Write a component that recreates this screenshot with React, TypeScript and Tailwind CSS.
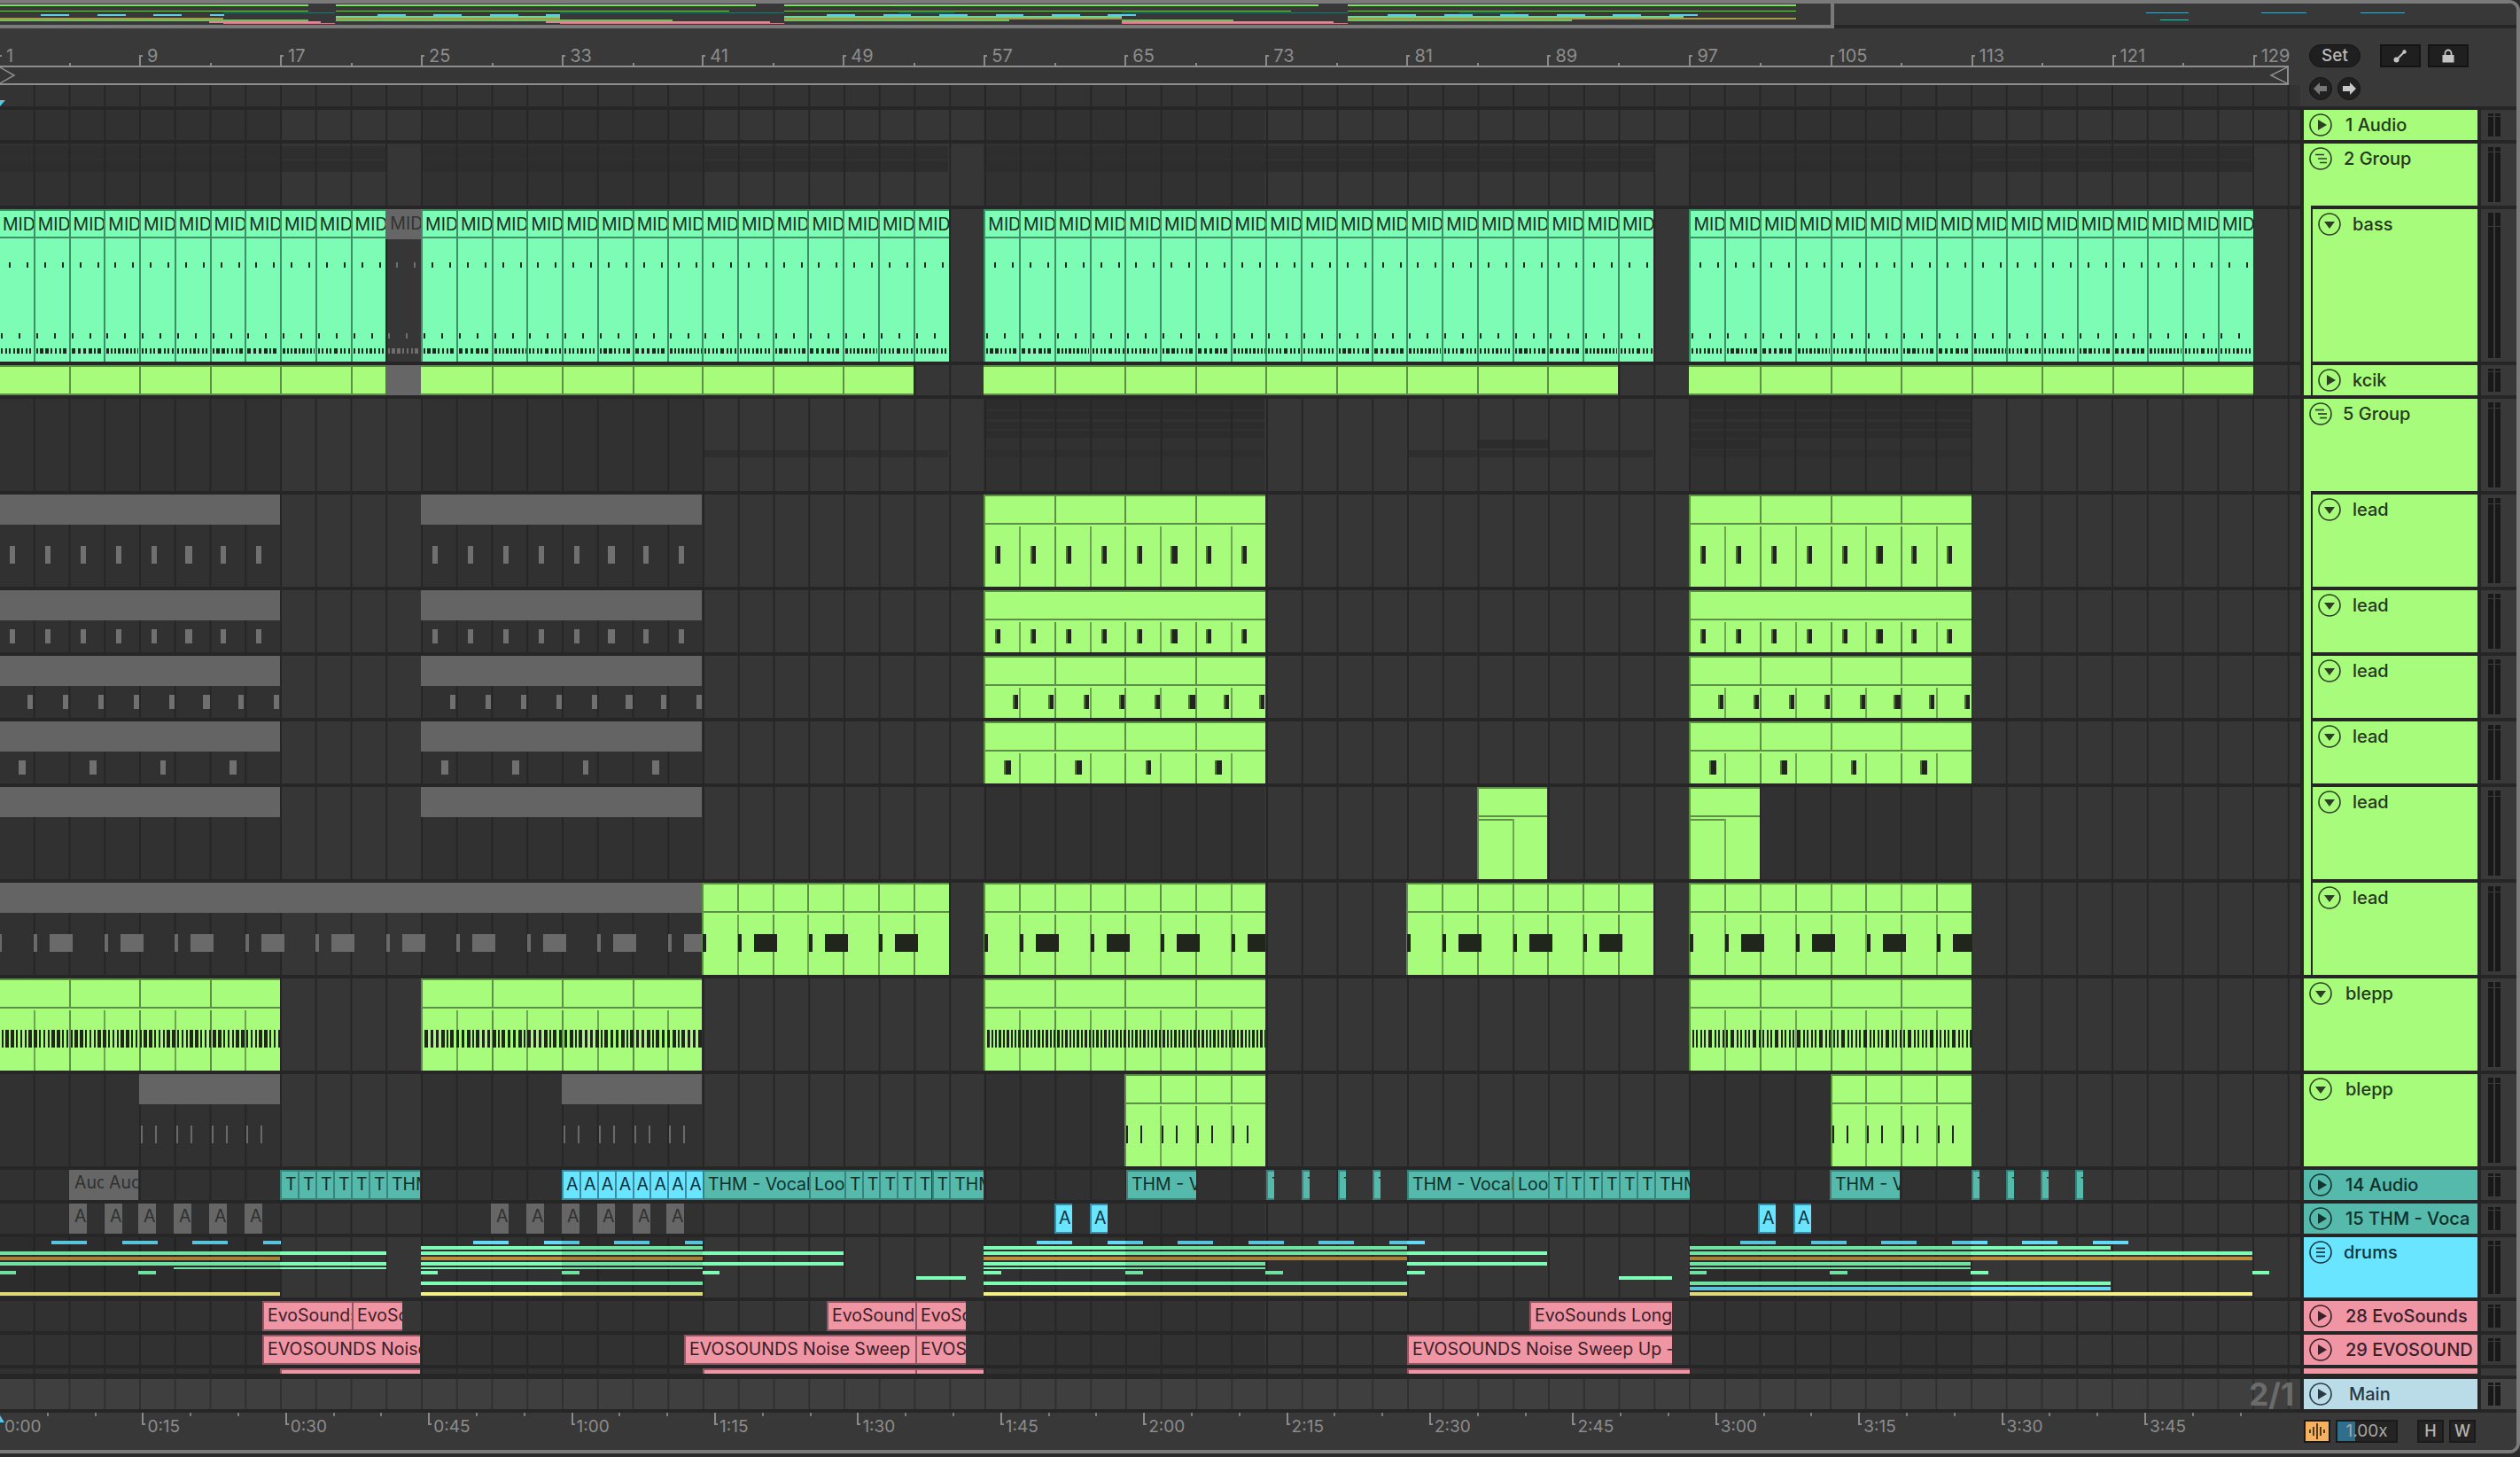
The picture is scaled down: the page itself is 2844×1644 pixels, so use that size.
import type { ReactNode } from "react";

// arrangement scale: 2 bars = 39.76px, the middle of the song sits a pixel to the left in the shot
const bar = (b: number) => -2 + (b - 1) * 19.88 - (b >= 41 && b <= 95 ? 1 : 0);

type Seg = [number, number];

function Box({ x, w, y, h, className = "", children }: { x: number; w: number; y?: number; h?: number; className?: string; children?: ReactNode }) {
  return (
    <div
      className={"absolute " + className}
      style={{ left: x, width: w, top: y ?? 0, ...(h === undefined ? { bottom: 0 } : { height: h }) }}
    >
      {children}
    </div>
  );
}

const DARK_COLS: Seg[] = [[0, 316], [475, 793], [1110, 1427], [1907, 2224]];

function Lane({ under, children, main }: { under?: ReactNode; children?: ReactNode; main?: boolean }) {
  return (
    <div className={"relative h-full w-[2596px] shrink-0 overflow-hidden " + (main ? "bg-[#3f3f3f]" : "bg-[#363636]")}>
      {!main && DARK_COLS.map(([a, b]) => <Box key={a} x={a} w={b - a} className="bg-[#313131]" />)}
      {under}
      <div
        className={
          "absolute inset-0 bg-size-[39.76px_100%] bg-position-[-2px_0] " +
          (main
            ? "bg-[linear-gradient(90deg,#303030_2px,transparent_2px)]"
            : "bg-[linear-gradient(90deg,#262626_2px,transparent_2px)]")
        }
      />
      {children}
    </div>
  );
}

function Meter({ top, main }: { top: string; main?: boolean }) {
  const col = (
    <div className="flex w-[6px] flex-col gap-px">
      <div className={"bg-[#181818] " + top} />
      <div className="flex-1 bg-[#181818]" />
    </div>
  );
  return (
    <div className={"flex h-full w-[40px] shrink-0 gap-[2px] py-1 pl-2 " + (main ? "bg-[#444444]" : "bg-[#393939]")}>
      {col}
      {col}
    </div>
  );
}

type IconKind = "play" | "group" | "list" | "down";

function TrackIcon({ kind, color }: { kind: IconKind; color: string }) {
  return (
    <svg width="26" height="26" viewBox="0 0 26 26" className="shrink-0">
      <circle cx="13" cy="13" r="12" fill="none" stroke={color} strokeWidth="1.6" />
      {kind === "play" && <polygon points="10,7 10,19 20,13" fill={color} />}
      {kind === "down" && <polygon points="7,10 19,10 13,18" fill={color} />}
      {kind === "group" && (
        <g stroke={color} strokeWidth="1.7">
          <line x1="7" y1="8.5" x2="17" y2="8.5" />
          <line x1="10" y1="13" x2="20" y2="13" />
          <line x1="12" y1="17.5" x2="20" y2="17.5" />
        </g>
      )}
      {kind === "list" && (
        <g stroke={color} strokeWidth="1.7">
          <line x1="8" y1="8.5" x2="18" y2="8.5" />
          <line x1="8" y1="13" x2="18" y2="13" />
          <line x1="8" y1="17.5" x2="18" y2="17.5" />
        </g>
      )}
    </svg>
  );
}

const GREEN = { bg: "bg-[#a8fc7c]", text: "text-[#25381a]", stroke: "#2b4120" };
const TEAL = { bg: "bg-[#55b9ab]", text: "text-[#10302c]", stroke: "#12352f" };
const BLUE = { bg: "bg-[#69e5ff]", text: "text-[#123640]", stroke: "#123640" };
const PINK = { bg: "bg-[#f095a4]", text: "text-[#3b2029]", stroke: "#3b2029" };
const MAIN = { bg: "bg-[#b9dce8]", text: "text-[#2a3a42]", stroke: "#2a3a42" };

function Head({ tone, kind, label, gap, nested }: { tone: typeof GREEN; kind: IconKind; label: string; gap: string; nested?: boolean }) {
  return (
    <div className={"relative h-full w-[196px] shrink-0 " + (nested ? "" : tone.bg)}>
      {nested && <div className={"absolute -top-1 bottom-0 left-0 w-2 " + tone.bg} />}
      <div className={"flex h-full items-start overflow-hidden pt-[4px] " + (nested ? "ml-[10px] pl-[6px] " + tone.bg : "pl-[6px]")}>
        <div className={"flex items-center whitespace-nowrap text-[20px] font-medium leading-[26px] " + tone.text + " " + gap}>
          <TrackIcon kind={kind} color={tone.stroke} />
          <span>{label}</span>
        </div>
      </div>
    </div>
  );
}

function Row({ h, head, meter, main, children }: { h: string; head: ReactNode; meter: string; main?: boolean; children: ReactNode }) {
  return (
    <div className={"flex w-[2840px] gap-1 " + h}>
      {children}
      {head}
      <Meter top={meter} main={main} />
    </div>
  );
}

const LINE = "bg-[#5e8f46]";

function MidiClip({ s, e, title, noTop }: { s: number; e: number; title: number; noTop?: boolean }) {
  const left = bar(s);
  const width = bar(e) - left;
  const tlines: number[] = [];
  const blines: number[] = [];
  if (title) for (let b = s + title; b < e; b += title) tlines.push(b);
  for (let b = s + 2; b < e; b += 2) blines.push(b);
  return (
    <Box x={left} w={width} className="overflow-hidden border-l-2 border-t-2 border-[#5e8f46] bg-[#a8fc7c]">
      <div className="h-[32px] border-b-2 border-[#5e8f46]" />
      {tlines.map((b) => <Box key={b} x={bar(b) - left - 2} w={2} h={32} className={LINE} />)}
      {!noTop && blines.map((b) => (
        <Box key={b} x={bar(b) - left - 2} w={2} y={34} h={200} className={(b - s) % 4 === 0 ? LINE : "bg-[#6ea553]"} />
      ))}
    </Box>
  );
}

const GrayTitle = ({ s, e }: { s: number; e: number }) => (
  <Box x={bar(s)} w={bar(e) - bar(s)} h={34} className="bg-[#646464]" />
);

// per-clip note placement: every start gets the same offset list
function Notes({ starts, offs, y, h, gray, edge = true }: { starts: number[]; offs: Seg[]; y: number; h: number; gray?: boolean; edge?: boolean }) {
  return (
    <>
      {starts.flatMap((st) =>
        offs.map(([o, w]) => (
          <Box
            key={st + "-" + o}
            x={st + o}
            w={w}
            y={y}
            h={h}
            className={
              gray
                ? "bg-[#707070]"
                : "bg-[#20261c] " + (edge ? "border-l-2 border-[#566a4a]" : "")
            }
          />
        )),
      )}
    </>
  );
}

function periodic(from: number, to: number, period: number, offs: Seg[]) {
  const out: Seg[] = [];
  for (let x = from; x < to; x += period) {
    for (const [o, w] of offs) {
      if (x + o < to) out.push([x + o, Math.min(w, to - x - o)]);
    }
  }
  return out;
}

function dense(from: number, to: number, seed: number) {
  const out: Seg[] = [];
  let x = from + 3;
  let i = 0;
  while (x < to) {
    const k = (i * 7 + seed * 13 + (i * i) % 5) % 5;
    const w = [2, 2, 3, 2, 4][k];
    const g = [2, 2, 2, 3, 3][(k + i) % 5];
    out.push([x, Math.min(w, to - x)]);
    x += w + g;
    i++;
  }
  return out;
}

function Ticks({ segs, y, h, className }: { segs: Seg[]; y: number; h: number; className: string }) {
  return (
    <>
      {segs.map(([x, w]) => <Box key={x} x={x} w={w} y={y} h={h} className={className} />)}
    </>
  );
}

const MINT_SPANS: Seg[] = [[-1, 23], [25, 55], [57, 95], [97, 129]];

function BassLane() {
  const clips: number[] = [];
  MINT_SPANS.forEach(([s, e]) => {
    for (let b = s; b < e; b += 2) clips.push(b);
  });
  const off = [...clips.map((b) => bar(b)), bar(23)];
  return (
    <Lane>
      {clips.map((b) => (
        <Box key={b} x={bar(b)} w={39.76} className="overflow-hidden border-l-2 border-t-2 border-[#3f8f66] bg-[#7cfcb4]">
          <div className="h-[31px] overflow-hidden whitespace-nowrap border-b-2 border-[#3f8f66] pl-[3px] text-[19.5px] leading-[30px] text-[#1d2f25]">MID</div>
        </Box>
      ))}
      <Box x={bar(23)} w={39.76} h={34} className="overflow-hidden bg-[#666666] pl-[5px] text-[19.5px] leading-[32px] text-[#333333]">MID</Box>
      {off.map((x, i) => {
        const g = i === off.length - 1;
        const c = g ? "bg-[#6e6e6e]" : "bg-[#1d2a22]";
        return (
          <div key={i}>
            <Box x={x + 12} w={2} y={60} h={6} className={c} />
            <Box x={x + 32} w={2} y={60} h={6} className={c} />
            <Box x={x + 3} w={2} y={140} h={6} className={c} />
            <Box x={x + 23} w={2} y={140} h={6} className={c} />
            <Ticks segs={dense(x, x + 39, i)} y={157} h={6} className={c} />
          </div>
        );
      })}
    </Lane>
  );
}

const KCIK: Seg[] = [[1, 23], [25, 53], [57, 93], [97, 129]];

function KcikLane() {
  return (
    <Lane>
      {KCIK.map(([s, e]) => {
        const marks: number[] = [];
        for (let b = s + 4; b < e; b += 4) marks.push(b);
        return (
          <Box key={s} x={bar(s)} w={bar(e) - bar(s)} className="overflow-hidden border-y-2 border-[#5e8f46] bg-[#a8fc7c]">
            {marks.map((b) => <Box key={b} x={bar(b) - bar(s)} w={2} className={LINE} />)}
          </Box>
        );
      })}
      <Box x={bar(23)} w={39.76} className="bg-[#666666]" />
    </Lane>
  );
}

function Band({ spans, y, h, c = "bg-[#2c2c2c]" }: { spans: Seg[]; y: number; h: number; c?: string }) {
  return (
    <>
      {spans.map(([a, b]) => <Box key={a + "-" + y} x={a} w={b - a} y={y} h={h} className={c} />)}
    </>
  );
}

const G25 = [bar(1), bar(25)];
const A5797 = [bar(57), bar(97)];
const L1: Seg[] = [[13, 6], [53, 6], [93, 6], [133, 6], [173, 6], [211, 8], [251, 6], [291, 6]];
const L3: Seg[] = L1.map(([o, w]) => [o + 20, w]);
const L4: Seg[] = [[23, 8], [103, 8], [183, 6], [261, 8]];

function LeadLane({ offs, y, h }: { offs: Seg[]; y: number; h: number }) {
  return (
    <Lane>
      <GrayTitle s={1} e={17} />
      <GrayTitle s={25} e={41} />
      <Notes starts={G25} offs={offs} y={y} h={h} gray />
      <MidiClip s={57} e={73} title={4} />
      <MidiClip s={97} e={113} title={4} />
      <Notes starts={A5797} offs={offs} y={y} h={h} />
    </Lane>
  );
}

const P6: Seg[] = [[0, 4], [40, 4], [58, 26]];

function Lead6Lane() {
  const spans: Seg[] = [[41, 55], [57, 73], [81, 95], [97, 113]];
  return (
    <Lane>
      <GrayTitle s={1} e={41} />
      <Ticks segs={periodic(bar(1), bar(41), 79.52, P6)} y={58} h={20} className="bg-[#6a6a6a]" />
      {spans.map(([s, e]) => <MidiClip key={s} s={s} e={e} title={2} />)}
      {spans.map(([s, e]) => (
        <Ticks key={s} segs={periodic(bar(s) + 1, bar(e), 79.52, P6)} y={58} h={20} className="bg-[#20261c]" />
      ))}
    </Lane>
  );
}

function Blepp1Lane() {
  const spans: Seg[] = [[1, 17], [25, 41], [57, 73], [97, 113]];
  return (
    <Lane>
      {spans.map(([s, e]) => <MidiClip key={s} s={s} e={e} title={4} />)}
      {spans.map(([s, e], i) => (
        <Ticks key={s} segs={dense(bar(s) + 1, bar(e), i + 2)} y={58} h={20} className="bg-[#20261c]" />
      ))}
    </Lane>
  );
}

const P8: Seg[] = [[2, 2], [18, 2]];

function Blepp2Lane() {
  return (
    <Lane>
      <GrayTitle s={9} e={17} />
      <GrayTitle s={33} e={41} />
      <Ticks segs={periodic(bar(9), bar(17), 39.76, P8)} y={58} h={20} className="bg-[#6a6a6a]" />
      <Ticks segs={periodic(bar(33), bar(41), 39.76, P8)} y={58} h={20} className="bg-[#6a6a6a]" />
      <MidiClip s={65} e={73} title={2} />
      <MidiClip s={105} e={113} title={2} />
      <Ticks segs={periodic(bar(65), bar(73), 39.76, P8)} y={58} h={20} className="bg-[#20261c]" />
      <Ticks segs={periodic(bar(105), bar(113), 39.76, P8)} y={58} h={20} className="bg-[#20261c]" />
    </Lane>
  );
}

type Tone = "gray" | "teal" | "cyan" | "pink";
const CLIP_TONE: Record<Tone, string> = {
  gray: "bg-[#666666] text-[#303030] pl-[6px]",
  teal: "bg-[#55b9ab] text-[#10302c] border-y-2 border-l-2 border-[#39847a] pl-[4px]",
  cyan: "bg-[#69e5ff] text-[#10323c] border-y-2 border-l-2 border-[#3d8ba0] pl-[3px]",
  pink: "bg-[#f095a4] text-[#3b2029] border-y-2 border-l-2 border-[#8f5763] pl-[4px]",
};

function Label({ a, b, t, tone }: { a: number; b: number; t: string; tone: Tone }) {
  return (
    <Box x={a} w={b - a} className={"overflow-hidden whitespace-nowrap text-[19.5px] leading-[29px] " + CLIP_TONE[tone]}>
      {t}
    </Box>
  );
}

type L = [number, number, string];

function tRun(from: number, step: number, n: number, end: number, last: string): L[] {
  const out: L[] = [];
  for (let i = 0; i < n; i++) out.push([from + i * step, from + (i + 1) * step, "T"]);
  out.push([from + n * step, end, last]);
  return out;
}

const TEALS: L[] = [
  ...tRun(316, 20, 6, 474, "THM"),
  [793, 913, "THM - Vocal"],
  [913, 953, "Loop"],
  ...tRun(953, 19.7, 6, 1110, "THM"),
  [1271, 1350, "THM - Vocal"],
  [1429, 1438, "T"],
  [1469, 1478, "T"],
  [1510, 1519, "T"],
  [1549, 1558, "T"],
  [1588, 1707, "THM - Vocal"],
  [1707, 1747, "Loop"],
  ...tRun(1747, 20, 6, 1907, "THM"),
  [2065, 2144, "THM - Vocal"],
  [2225, 2234, "T"],
  [2264, 2273, "T"],
  [2303, 2312, "T"],
  [2342, 2351, "T"],
];

const GRAY_A = [78, 118, 156, 196, 236, 276, 554, 594, 634, 674, 714, 752];
const CYAN_A = [1190, 1230, 1984, 2024];

type DrumLine = { y: number; c: string; segs: Seg[] };
const MINT = "bg-[#7cfcb4]";
const blueRun = (start: number, n: number, last = 40) =>
  Array.from({ length: n }, (_, i): Seg => [start + i * 79.6, start + i * 79.6 + (i === n - 1 ? last : 40)]);

const DRUMS: DrumLine[] = [
  { y: 4, c: "bg-[#63daf7]", segs: [...blueRun(58, 4, 20), ...blueRun(534, 4, 20), ...blueRun(1170, 6), ...blueRun(1964, 6)] },
  { y: 10, c: MINT, segs: [[475, 793], [1110, 1588], [1907, 2382]] },
  { y: 16, c: MINT, segs: [[0, 436], [475, 952], [1110, 1746], [1907, 2542]] },
  { y: 22, c: "bg-[#bc8f3c]", segs: [[0, 316], [475, 793], [1110, 1588], [1907, 2542]] },
  { y: 28, c: MINT, segs: [[0, 436], [475, 952], [1110, 1428], [1588, 1746], [1907, 2224]] },
  { y: 34, c: MINT, segs: [[196, 436], [475, 793], [1110, 1428], [1907, 2224]] },
  { y: 38, c: MINT, segs: [[0, 18], [156, 176], [475, 494], [634, 654], [793, 812], [1110, 1130], [1270, 1290], [1428, 1448], [1588, 1608], [1907, 1926], [2065, 2085], [2224, 2244], [2542, 2561]] },
  { y: 44, c: MINT, segs: [[1034, 1090], [1827, 1887]] },
  { y: 50, c: MINT, segs: [[475, 793], [1110, 1588], [1907, 2382]] },
  { y: 56, c: "bg-[#63daf7]", segs: [[1907, 2382]] },
  { y: 62, c: "bg-[#f5f285]", segs: [[0, 316], [475, 793], [1110, 1588], [1907, 2542]] },
];

function DrumsLane() {
  return (
    <Lane>
      {DRUMS.map((d) => (
        <Band key={d.y} spans={d.segs} y={d.y} h={d.y === 34 ? 2 : 4} c={d.c} />
      ))}
      <Band spans={[[0, 316], [634, 793], [1270, 1588], [1907, 2224]]} y={0} h={68} c="bg-black/10" />
    </Lane>
  );
}

function PartialLane() {
  return (
    <Lane>
      {([[316, 474], [793, 1033], [1033, 1110], [1588, 1907]] as Seg[]).map(([a, b]) => (
        <Box key={a} x={a} w={b - a} className="border-l-2 border-t-2 border-[#8f5763] bg-[#f095a4]" />
      ))}
    </Lane>
  );
}

const TOP_BANDS: Seg[] = [[0, 436], [475, 1070], [1110, 1866], [1907, 2542]];

function MetricRuler() {
  const labels = [1, 9, 17, 25, 33, 41, 49, 57, 65, 73, 81, 89, 97, 105, 113, 121, 129];
  const mids: number[] = [];
  for (let b = 5; b <= 133; b += 8) mids.push(b);
  return (
    <div className="relative h-[42px] overflow-hidden">
      {labels.map((b) => (
        <div key={b} className="absolute top-[30px] h-[12px] w-[4px] border-l-2 border-t-2 border-[#8a8a8a]" style={{ left: bar(b) }} />
      ))}
      {mids.map((b) => <Box key={b} x={bar(b)} w={2} y={39} h={3} className="bg-[#8a8a8a]" />)}
      {labels.map((b) => (
        <div key={b} className="absolute top-[19px] text-[20px] leading-[24px] text-[#8c8c8c]" style={{ left: bar(b) + 9 }}>{b}</div>
      ))}
    </div>
  );
}

function TimeRuler() {
  const step = 161.4;
  const labels = ["0:00", "0:15", "0:30", "0:45", "1:00", "1:15", "1:30", "1:45", "2:00", "2:15", "2:30", "2:45", "3:00", "3:15", "3:30", "3:45"];
  const minor: number[] = [];
  for (let i = 1; i * (step / 3) < 2585; i++) if (i % 3 !== 0) minor.push(i * (step / 3) - 1);
  return (
    <div className="relative h-full w-[2596px] shrink-0 overflow-hidden bg-[#383838]">
      {minor.map((x) => <Box key={x} x={x} w={2} y={0} h={4} className="bg-[#7c7c7c]" />)}
      {labels.map((t, i) => (
        <div key={t}>
          {i > 0 && <div className="absolute top-0 h-[14px] w-[4px] border-b-2 border-l-2 border-[#8a8a8a]" style={{ left: i * step - 1 }} />}
          <div className="absolute top-[4px] text-[19px] leading-[24px] text-[#8c8c8c]" style={{ left: i * step + 5 }}>{t}</div>
        </div>
      ))}
      <svg width="8" height="8" viewBox="0 0 8 8" className="absolute left-0 top-[3px]">
        <polygon points="0,0 5,8 0,8" fill="#5cc4e0" />
      </svg>
    </div>
  );
}

function Overview() {
  const k = 0.7975;
  const map: [number, number, string, Seg[]][] = [
    [1, 2, "bg-[#7ce060]", [[0, 436], [475, 1070], [1110, 1866], [1907, 2542]]],
    [8, 1, "bg-[#7cc860]", [[0, 436], [475, 1032], [1110, 1827], [1907, 2542]]],
    [10, 1, "bg-[#2f6f6c]", [[316, 474], [793, 1110], [1271, 1350], [1588, 1907], [2065, 2144]]],
    [12, 2, "bg-[#5fcde8]", DRUMS[0].segs],
    [14, 2, "bg-[#6ad69c]", DRUMS[1].segs],
    [16, 2, "bg-[#a89a48]", DRUMS[3].segs],
    [18, 2, "bg-[#70c060]", DRUMS[4].segs],
    [20, 2, "bg-[#d88a94]", [[296, 454], [772, 1090], [1588, 1887]]],
    [22, 1, "bg-[#c97a86]", [[316, 474], [793, 1110], [1588, 1907]]],
  ];
  return (
    <div className="relative h-[24px] w-[2840px] shrink-0 overflow-hidden bg-[#383838]">
      {map.map(([y, h, c, segs]) => (
        <div key={y}>
          {segs.map(([a, b]) => <Box key={a} x={a * k} w={(b - a) * k} y={y} h={h} className={c} />)}
        </div>
      ))}
      <Box x={2422} w={48} y={10} h={1} className="bg-[#4fa3bd]" />
      <Box x={2438} w={32} y={18} h={1} className="bg-[#49b8a8]" />
      <Box x={2552} w={51} y={10} h={1} className="bg-[#4fa3bd]" />
      <Box x={2664} w={50} y={10} h={1} className="bg-[#4fa3bd]" />
      <Box x={2066} w={4} y={0} h={24} className="bg-[#7a7a7a]" />
    </div>
  );
}

function Controls() {
  return (
    <div className="h-full flex-1 bg-[#393939] pl-[6px] pt-[18px]">
      <div className="flex items-start">
        <div className="flex h-[26px] w-[58px] items-center justify-center rounded-full border border-[#141414] bg-[#1f1f1f] text-[19px] font-medium text-[#b8b8b8]">Set</div>
        <div className="ml-[22px] flex h-[26px] w-[46px] items-center justify-center border-2 border-[#141414] bg-[#1f1f1f]">
          <svg width="16" height="16" viewBox="0 0 16 16">
            <line x1="3.5" y1="12.5" x2="12.5" y2="3.5" stroke="#c4c4c4" strokeWidth="2" />
            <circle cx="3.5" cy="12.5" r="3" fill="#c4c4c4" />
            <circle cx="12.5" cy="3.5" r="2.2" fill="#c4c4c4" />
          </svg>
        </div>
        <div className="ml-[8px] flex h-[26px] w-[46px] items-center justify-center border-2 border-[#141414] bg-[#1f1f1f]">
          <svg width="16" height="16" viewBox="0 0 16 16">
            <path d="M4.5 7V5a3.5 3.5 0 0 1 7 0v2" fill="none" stroke="#c4c4c4" strokeWidth="1.8" />
            <rect x="1.5" y="7" width="13" height="8.5" fill="#c4c4c4" />
          </svg>
        </div>
      </div>
      <div className="mt-[11px] flex gap-[6px]">
        {[false, true].map((r) => (
          <div key={String(r)} className="flex h-[26px] w-[26px] items-center justify-center rounded-full border border-[#141414] bg-[#212121]">
            <svg width="16" height="14" viewBox="0 0 16 14" className={r ? "rotate-180" : ""}>
              <polygon points="0,7 7,0 7,4 15,4 15,10 7,10 7,14" fill={r ? "#c8c8c8" : "#777777"} />
            </svg>
          </div>
        ))}
      </div>
    </div>
  );
}

function BottomControls() {
  return (
    <div className="flex h-full flex-1 items-start bg-[#393939] pt-[8px]">
      <div className="flex h-[26px] w-[30px] items-center justify-center border-2 border-[#1a1a1a] bg-[#f5b060]">
        <svg width="20" height="18" viewBox="0 0 20 18">
          <g stroke="#2a2014" strokeWidth="1.6">
            <line x1="2" y1="7" x2="2" y2="11" />
            <line x1="6" y1="4" x2="6" y2="14" />
            <line x1="10" y1="0" x2="10" y2="18" />
            <line x1="14" y1="4" x2="14" y2="14" />
            <line x1="18" y1="7" x2="18" y2="11" />
          </g>
        </svg>
      </div>
      <div className="relative ml-[6px] h-[26px] w-[70px] overflow-hidden border-2 border-[#1a1a1a] bg-[#242424]">
        <div className="absolute inset-y-0 left-0 w-[20px] bg-[#2f6f8c]" />
        <div className="relative text-center text-[19px] leading-[22px] text-[#a8a8a8]">1.00x</div>
      </div>
      <div className="ml-[22px] h-[26px] w-[30px] border-2 border-[#1a1a1a] bg-[#242424] text-center text-[18px] font-medium leading-[22px] text-[#b4b4b4]">H</div>
      <div className="ml-[6px] h-[26px] w-[30px] border-2 border-[#1a1a1a] bg-[#242424] text-center text-[18px] font-medium leading-[22px] text-[#b4b4b4]">W</div>
    </div>
  );
}

export default function App() {
  const lead = (key: string) => <Head key={key} tone={GREEN} kind="down" label="lead" gap="gap-[13px]" nested />;
  return (
    <div className="h-[1644px] w-[2844px] overflow-hidden bg-[#2b2b2b] font-['Inter',sans-serif]">
      <div className="flex h-[1640px] flex-col overflow-hidden rounded-r-[12px] border-y-4 border-r-4 border-[#7a7a7a] bg-[#262626]">
        <Overview />
        <div className="h-1 w-[2070px] shrink-0 bg-[#7a7a7a]" />
        <div className="flex h-[88px] w-[2840px] shrink-0 gap-1 bg-[#393939]">
          <div className="w-[2596px] shrink-0">
            <MetricRuler />
            <div className="relative h-[22px] w-[2583px] border-y-2 border-r-2 border-[#8e8e8e] bg-[#363636]">
              <svg width="18" height="18" viewBox="0 0 18 18" className="absolute left-0 top-0">
                <polyline points="0,0 16,9 0,18" fill="none" stroke="#8e8e8e" strokeWidth="1.5" />
              </svg>
              <svg width="20" height="18" viewBox="0 0 20 18" className="absolute right-0 top-0">
                <polyline points="20,0 2,9 20,18" fill="none" stroke="#8e8e8e" strokeWidth="1.5" />
              </svg>
            </div>
            <div className="relative h-[24px] bg-[#333333] bg-[linear-gradient(90deg,#262626_2px,transparent_2px)] bg-size-[39.76px_100%] bg-position-[-2px_0]">
              <svg width="6" height="7" viewBox="0 0 6 7" className="absolute left-0 top-[17px]">
                <polygon points="0,0 6,0 0,7" fill="#5cc4e0" />
              </svg>
            </div>
          </div>
          <Controls />
        </div>
        <div className="mt-1 flex flex-col gap-1">
          <Row h="h-[34px]" meter="h-[3px]" head={<Head tone={GREEN} kind="play" label="1 Audio" gap="gap-[15px]" />}>
            <Lane />
          </Row>
          <Row h="h-[70px]" meter="h-[5px]" head={<Head tone={GREEN} kind="group" label="2 Group" gap="gap-[13px]" />}>
            <Lane
              under={
                <>
                  <Band spans={TOP_BANDS} y={3} h={15} c="bg-[#2e2e2e]" />
                  <Band spans={TOP_BANDS} y={19} h={13} c="bg-[#2d2d2d]" />
                </>
              }
            />
          </Row>
          <Row h="h-[172px]" meter="h-[15px]" head={<Head tone={GREEN} kind="down" label="bass" gap="gap-[13px]" nested />}>
            <BassLane />
          </Row>
          <Row h="h-[34px]" meter="h-[3px]" head={<Head tone={GREEN} kind="play" label="kcik" gap="gap-[13px]" nested />}>
            <KcikLane />
          </Row>
          <Row h="h-[104px]" meter="h-[6px]" head={<Head tone={GREEN} kind="group" label="5 Group" gap="gap-[12px]" />}>
            <Lane
              under={
                <>
                  {[[0, 12], [14, 9], [26, 8], [36, 8]].map(([y, h]) => (
                    <Band key={y} spans={[[1110, 1427], [1907, 2224]]} y={y} h={h} />
                  ))}
                  <Band spans={[[1667, 1747], [1907, 1986]]} y={46} h={10} />
                  <Band spans={[[793, 1070], [1110, 1427], [1589, 1865], [1907, 2224]]} y={58} h={8} c="bg-[#2e2e2e]" />
                </>
              }
            />
          </Row>
          <Row h="h-[104px]" meter="h-[6px]" head={lead("a")}>
            <LeadLane offs={L1} y={58} h={20} />
          </Row>
          <Row h="h-[70px]" meter="h-[5px]" head={lead("b")}>
            <Lane>
              <GrayTitle s={1} e={17} />
              <GrayTitle s={25} e={41} />
              <Notes starts={G25} offs={L1} y={44} h={16} gray />
              <MidiClip s={57} e={73} title={0} />
              <MidiClip s={97} e={113} title={0} />
              <Notes starts={A5797} offs={L1} y={44} h={16} />
            </Lane>
          </Row>
          <Row h="h-[70px]" meter="h-[5px]" head={lead("c")}>
            <LeadLane offs={L3} y={44} h={16} />
          </Row>
          <Row h="h-[70px]" meter="h-[5px]" head={lead("d")}>
            <LeadLane offs={L4} y={44} h={16} />
          </Row>
          <Row h="h-[104px]" meter="h-[6px]" head={lead("e")}>
            <Lane>
              <GrayTitle s={1} e={17} />
              <GrayTitle s={25} e={41} />
              <MidiClip s={85} e={89} title={0} />
              <MidiClip s={97} e={101} title={0} />
              <Box x={bar(85) + 2} w={38} y={36} h={2} className={LINE} />
              <Box x={bar(97) + 2} w={38} y={36} h={2} className={LINE} />
            </Lane>
          </Row>
          <Row h="h-[104px]" meter="h-[6px]" head={lead("f")}>
            <Lead6Lane />
          </Row>
          <Row h="h-[104px]" meter="h-[6px]" head={<Head tone={GREEN} kind="down" label="blepp" gap="gap-[15px]" />}>
            <Blepp1Lane />
          </Row>
          <Row h="h-[104px]" meter="h-[6px]" head={<Head tone={GREEN} kind="down" label="blepp" gap="gap-[15px]" />}>
            <Blepp2Lane />
          </Row>
          <Row h="h-[34px]" meter="h-[3px]" head={<Head tone={TEAL} kind="play" label="14 Audio" gap="gap-[15px]" />}>
            <Lane>
              <Label a={78} b={117} t="Audio" tone="gray" />
              <Label a={117} b={156} t="Audio" tone="gray" />
              {TEALS.map(([a, b, t]) => <Label key={a} a={a} b={b} t={t} tone="teal" />)}
              {Array.from({ length: 8 }, (_, i) => (
                <Label key={i} a={634 + i * 19.88} b={634 + (i + 1) * 19.88} t="A" tone="cyan" />
              ))}
            </Lane>
          </Row>
          <Row h="h-[34px]" meter="h-[3px]" head={<Head tone={TEAL} kind="play" label="15 THM - Voca" gap="gap-[15px]" />}>
            <Lane>
              {GRAY_A.map((a) => <Label key={a} a={a} b={a + 20} t="A" tone="gray" />)}
              {CYAN_A.map((a) => <Label key={a} a={a} b={a + 20} t="A" tone="cyan" />)}
            </Lane>
          </Row>
          <Row h="h-[68px]" meter="h-[5px]" head={<Head tone={BLUE} kind="list" label="drums" gap="gap-[13px]" />}>
            <DrumsLane />
          </Row>
          <Row h="h-[34px]" meter="h-[3px]" head={<Head tone={PINK} kind="play" label="28 EvoSounds" gap="gap-[15px]" />}>
            <Lane>
              <Label a={296} b={397} t="EvoSounds" tone="pink" />
              <Label a={397} b={454} t="EvoSounds" tone="pink" />
              <Label a={933} b={1033} t="EvoSounds" tone="pink" />
              <Label a={1033} b={1090} t="EvoSounds" tone="pink" />
              <Label a={1726} b={1887} t="EvoSounds Long" tone="pink" />
            </Lane>
          </Row>
          <Row h="h-[34px]" meter="h-[3px]" head={<Head tone={PINK} kind="play" label="29 EVOSOUND" gap="gap-[15px]" />}>
            <Lane>
              <Label a={296} b={474} t="EVOSOUNDS Noise" tone="pink" />
              <Label a={772} b={1033} t="EVOSOUNDS Noise Sweep" tone="pink" />
              <Label a={1033} b={1090} t="EVOSOUNDS" tone="pink" />
              <Label a={1588} b={1887} t="EVOSOUNDS Noise Sweep Up - " tone="pink" />
            </Lane>
          </Row>
          <Row h="h-[6px]" meter="h-[2px]" head={<div className="h-full w-[196px] shrink-0 bg-[#f095a4]" />}>
            <PartialLane />
          </Row>
        </div>
        <div className="mt-[6px] flex flex-col gap-1">
          <Row h="h-[34px]" meter="h-[3px]" main head={<Head tone={MAIN} kind="play" label="Main" gap="gap-[19px]" />}>
            <div className="relative">
              <Lane main />
              <div className="absolute right-[7px] top-0 text-[35px] font-bold leading-[34px] text-[#6b6b6b]">2/1</div>
            </div>
          </Row>
          <div className="flex h-[42px] w-[2840px] gap-1 bg-[#393939]">
            <TimeRuler />
            <BottomControls />
          </div>
        </div>
      </div>
    </div>
  );
}
